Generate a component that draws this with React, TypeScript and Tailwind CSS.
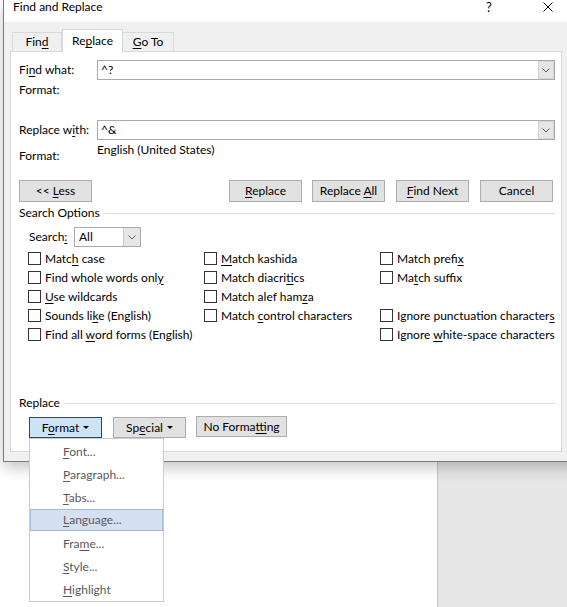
import React from "react";

// Windows-style access key: underline one letter of a label
function Acc({ t, i }: { t: string; i: number }) {
  return (
    <>
      {t.slice(0, i)}
      <span className="underline decoration-1 underline-offset-[2px]">{t[i]}</span>
      {t.slice(i + 1)}
    </>
  );
}

function Chevron() {
  return (
    <svg width="8" height="5" viewBox="0 0 8 5" className="block">
      <polyline points="0.5,0.5 4,4 7.5,0.5" fill="none" stroke="#606060" strokeWidth="1" />
    </svg>
  );
}

function Caret() {
  return (
    <svg width="6" height="3" viewBox="0 0 6 3" className="block ml-[4px]">
      <polygon points="0,0 6,0 3,3" fill="#000" />
    </svg>
  );
}

function Combo({ value }: { value: string }) {
  return (
    <div className="flex-1 h-[20px] flex bg-white border border-[#a9a9a9]">
      <span className="flex-1 pl-[3px] leading-[18px]">{value}</span>
      <div className="w-[16px] bg-[#e6e6e6] border border-[#d4d4d4] flex items-center justify-center">
        <Chevron />
      </div>
    </div>
  );
}

function Btn({ children, className = "" }: { children: React.ReactNode; className?: string }) {
  return (
    <div
      className={`h-[22px] w-[73px] flex items-center justify-center bg-[#e1e1e1] border border-[#adadad] whitespace-pre ${className}`}
    >
      <span>{children}</span>
    </div>
  );
}

function Check({ children }: { children: React.ReactNode }) {
  return (
    <div className="h-[19px] flex items-center gap-[4px]">
      <div className="w-[13px] h-[13px] shrink-0 bg-white border border-[#333333]" />
      <span className="whitespace-nowrap">{children}</span>
    </div>
  );
}

function Section({ title }: { title: string }) {
  return (
    <div className="h-[22px] flex items-center">
      <span className="whitespace-nowrap">{title}</span>
      <div className="flex-1 h-px ml-[5px] bg-[#dcdcdc]" />
    </div>
  );
}

const menuItems: { t: string; i: number }[] = [
  { t: "Font...", i: 0 },
  { t: "Paragraph...", i: 0 },
  { t: "Tabs...", i: 0 },
  { t: "Language...", i: 0 },
  { t: "Frame...", i: 3 },
  { t: "Style...", i: 0 },
  { t: "Highlight", i: 0 },
];

export default function App() {
  return (
    <div className="relative w-[567px] h-[607px] overflow-hidden bg-white font-[Lato,'Noto_Sans',sans-serif] text-[12px] leading-[16px] text-black">
      {/* document behind the dialog */}
      <div className="absolute inset-0 flex">
        <div className="w-[437px] bg-white" />
        <div className="flex-1 bg-[#e6e6e6] border-l border-[#c4c4c4]" />
      </div>

      {/* dialog window */}
      <div className="absolute left-[3px] top-0 w-[580px] h-[462px] flex flex-col bg-[#f0f0f0] border-l border-b border-[#7a7a7a] shadow-[0_6px_14px_rgba(0,0,0,0.22)]">
        <div className="h-[22px] shrink-0 flex items-start bg-white">
          <span className="w-[480px] pl-[9px] -mt-px">Find and Replace</span>
          <span className="w-[10px] mt-0 text-[13px] leading-[15px] text-center">?</span>
          <svg width="10" height="10" viewBox="0 0 10 10" className="ml-[49px] mt-[2px]">
            <path d="M0.5 0.5 L9.5 9.5 M9.5 0.5 L0.5 9.5" stroke="#000" strokeWidth="1" />
          </svg>
        </div>

        {/* tabs */}
        <div className="h-[29px] shrink-0 flex items-end pl-[8px]">
          <div className="w-[50px] h-[19px] flex items-center justify-center border border-b-0 border-[#d9d9d9]">
            <span><Acc t="Find" i={3} /></span>
          </div>
          <div className="relative z-10 -mb-px w-[61px] h-[23px] flex items-center justify-center bg-white border border-b-0 border-[#d9d9d9]">
            <span><Acc t="Replace" i={2} /></span>
          </div>
          <div className="w-[51px] h-[19px] flex items-center justify-center border border-b-0 border-l-0 border-[#d9d9d9]">
            <span><Acc t="Go To" i={0} /></span>
          </div>
        </div>

        {/* tab page */}
        <div className="ml-[6px] w-[552px] h-[401px] shrink-0 flex flex-col pl-[8px] pr-[6px] bg-white border border-[#d9d9d9]">
          <div className="mt-[8px] flex items-center">
            <span className="w-[78px]">
              <Acc t="Find what:" i={2} />
            </span>
            <Combo value="^?" />
          </div>
          <div className="h-[20px] flex items-center">Format:</div>

          <div className="mt-[20px] flex items-center">
            <span className="w-[78px]">
              <Acc t="Replace with:" i={9} />
            </span>
            <Combo value="^&" />
          </div>
          <div className="h-[24px] flex">
            <span className="w-[78px] pt-[8px]">Format:</span>
            <span className="pt-[2px]">English (United States)</span>
          </div>

          <div className="mt-[16px] flex">
            <Btn>
              {"<< "}
              <Acc t="Less" i={0} />
            </Btn>
            <Btn className="ml-[137px]">
              <Acc t="Replace" i={0} />
            </Btn>
            <Btn className="ml-[10px]">
              <Acc t="Replace All" i={8} />
            </Btn>
            <Btn className="ml-[11px]">
              <Acc t="Find Next" i={0} />
            </Btn>
            <Btn className="ml-[11px]">Cancel</Btn>
          </div>

          <Section title="Search Options" />

          <div className="mt-[3px] h-[20px] flex items-center pl-[10px]">
            <span className="w-[45px]">
              <Acc t="Search:" i={6} />
            </span>
            <div className="w-[67px] h-[20px] flex bg-white border border-[#a9a9a9]">
              <span className="flex-1 pl-[4px] leading-[18px]">All</span>
              <div className="w-[17px] flex items-center justify-center bg-[#e6e6e6] border-l border-[#c8c8c8]">
                <Chevron />
              </div>
            </div>
          </div>

          <div className="mt-[2px] ml-[9px] grid grid-cols-[176px_176px_176px] auto-rows-[19px]">
            <Check><Acc t="Match case" i={4} /></Check>
            <Check><Acc t="Match kashida" i={0} /></Check>
            <Check><Acc t="Match prefix" i={11} /></Check>

            <Check><Acc t="Find whole words only" i={20} /></Check>
            <Check><Acc t="Match diacritics" i={12} /></Check>
            <Check><Acc t="Match suffix" i={2} /></Check>

            <Check><Acc t="Use wildcards" i={0} /></Check>
            <Check><Acc t="Match alef hamza" i={14} /></Check>
            <div />

            <Check><Acc t="Sounds like (English)" i={9} /></Check>
            <Check><Acc t="Match control characters" i={6} /></Check>
            <Check><Acc t="Ignore punctuation characters" i={28} /></Check>

            <Check><Acc t="Find all word forms (English)" i={9} /></Check>
            <div />
            <Check><Acc t="Ignore white-space characters" i={7} /></Check>
          </div>

          <div className="mt-[48px]">
            <Section title="Replace" />
          </div>
          <div className="mt-[3px] flex items-start pl-[10px]">
            <div className="w-[73px] h-[21px] flex items-center justify-center bg-[#cce4f7] border border-[#005499]">
              <span><Acc t="Format" i={1} /></span>
              <Caret />
            </div>
            <div className="ml-[11px] w-[73px] h-[21px] flex items-center justify-center bg-[#e1e1e1] border border-[#adadad]">
              <span><Acc t="Special" i={2} /></span>
              <Caret />
            </div>
            <div className="ml-[10px] -mt-px w-[91px] h-[21px] flex items-center justify-center bg-[#e1e1e1] border border-[#adadad]">
              <span><Acc t="No Formatting" i={8} /></span>
            </div>
          </div>
        </div>
      </div>

      {/* Format drop-down menu */}
      <div className="absolute left-[29px] top-[438px] w-[135px] h-[164px] flex flex-col pt-px bg-white border border-[#cccccc] text-[#595959]">
        {menuItems.map((m) =>
          m.t === "Language..." ? (
            <div
              key={m.t}
              className="h-[22px] mb-px flex items-center pl-[32px] bg-[#d5e1f2] border border-[#a4bde3]"
            >
              <span><Acc t={m.t} i={m.i} /></span>
            </div>
          ) : (
            <div key={m.t} className="h-[23px] flex items-center pl-[33px]">
              <span><Acc t={m.t} i={m.i} /></span>
            </div>
          )
        )}
      </div>
    </div>
  );
}
